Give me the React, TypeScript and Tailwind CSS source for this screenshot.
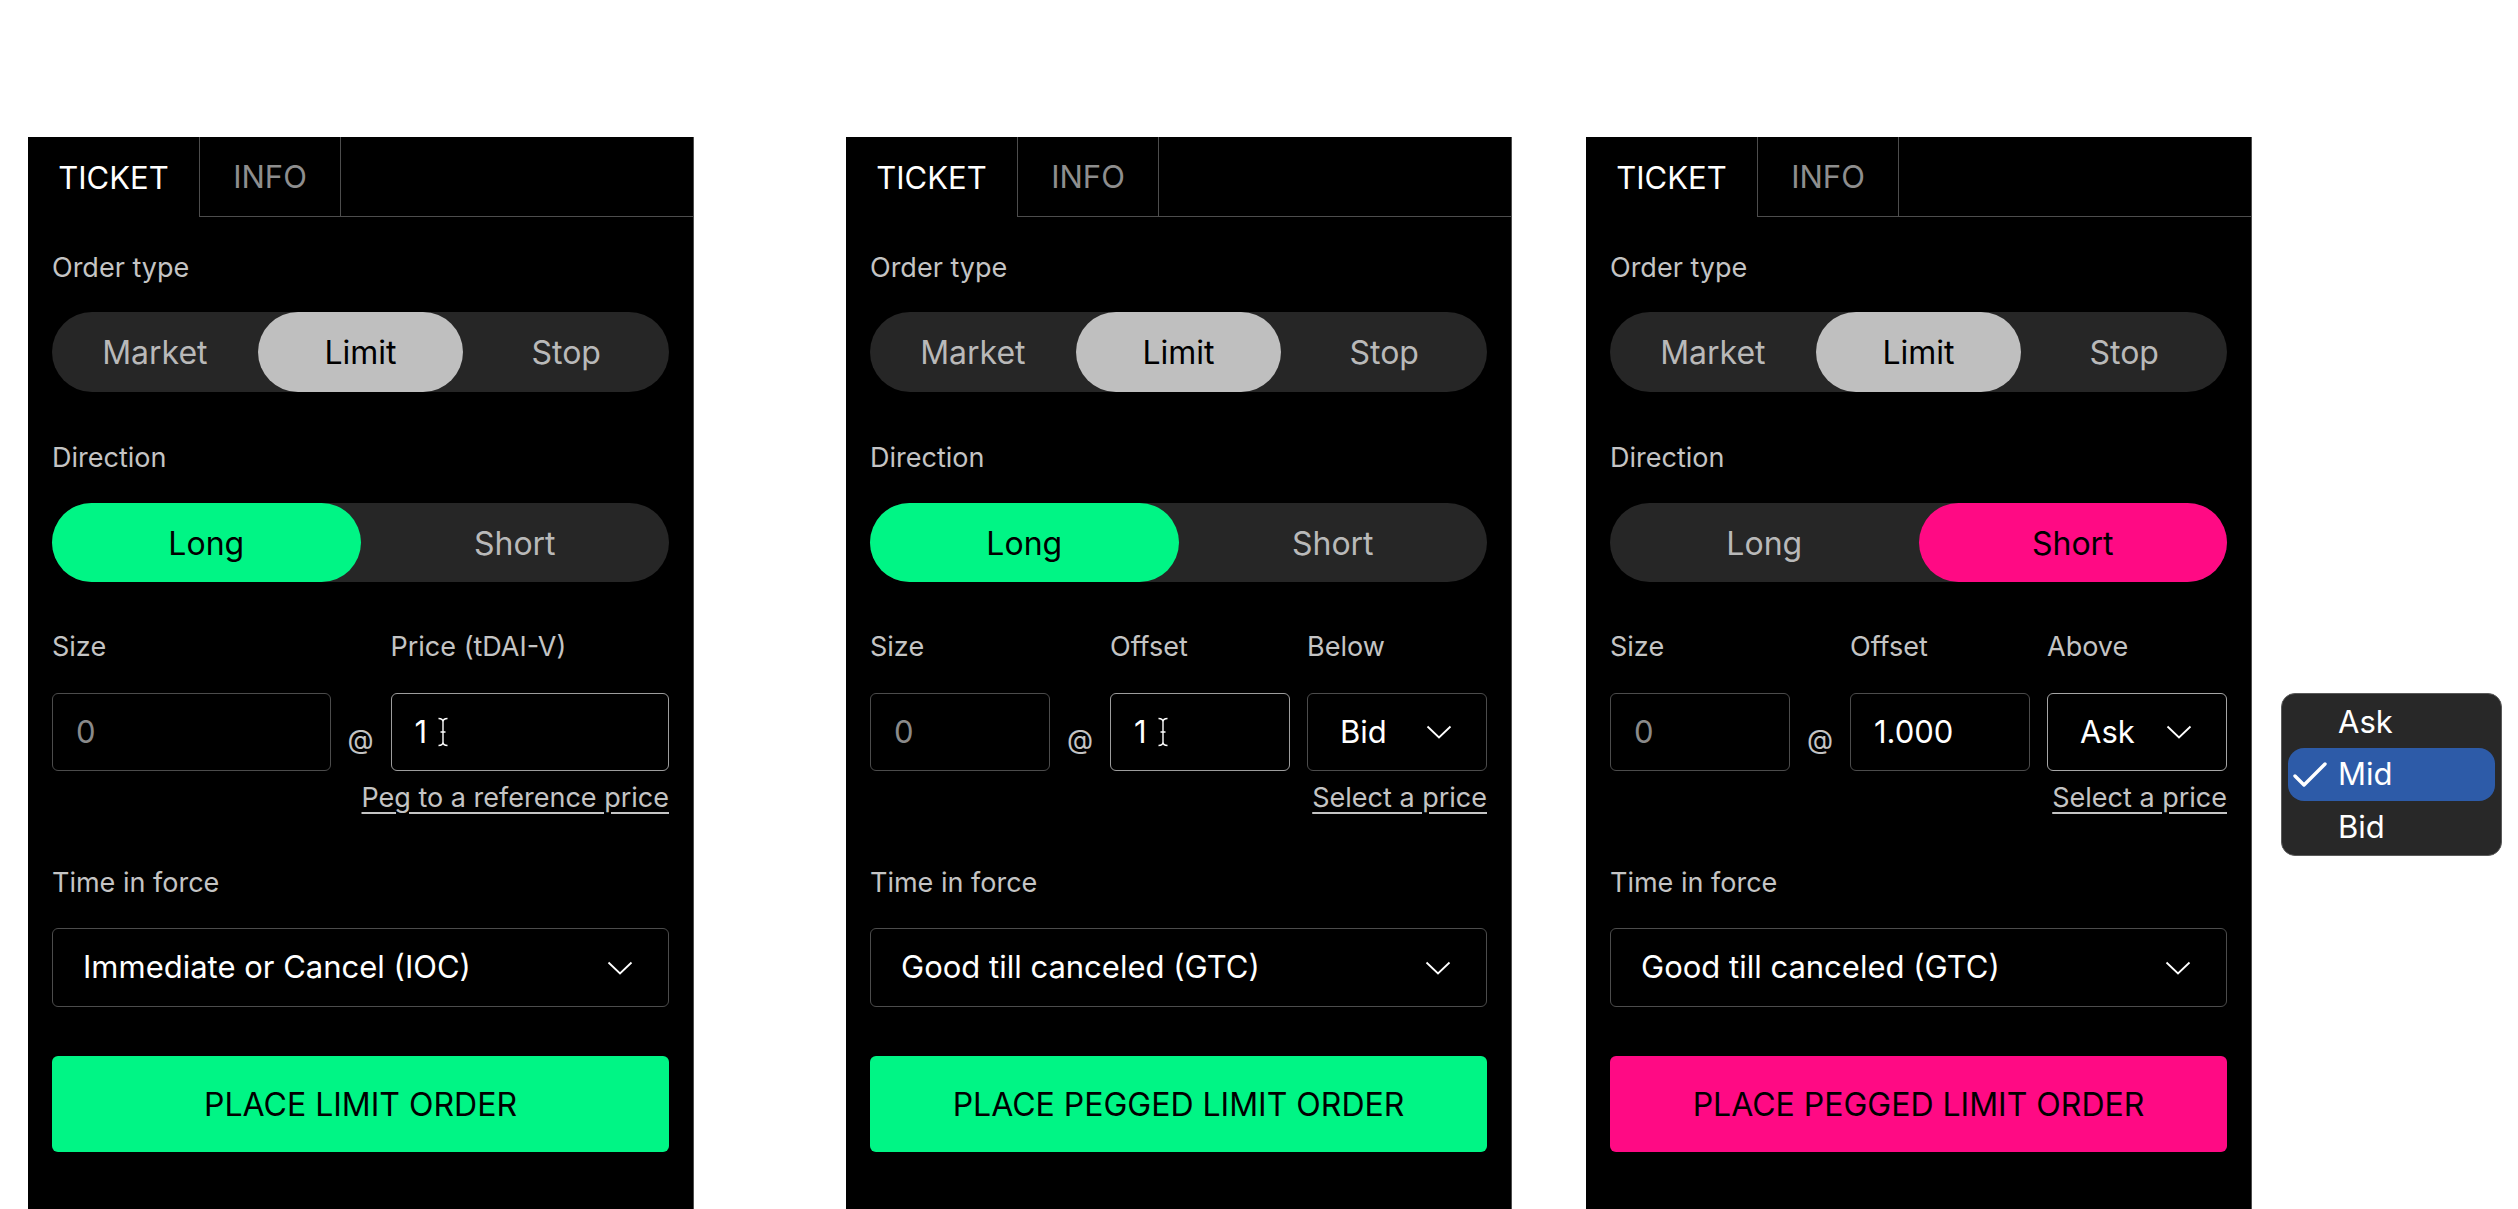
import clsx from 'clsx';

type Kind = 'limit' | 'below' | 'above';

function Chevron() {
  return (
    <svg width="26" height="14" viewBox="0 0 26 14" fill="none">
      <path d="M1.5 1.5 L13 12.5 L24.5 1.5" stroke="#ffffff" strokeWidth="1.8" />
    </svg>
  );
}

function IBeam() {
  return (
    <svg width="12" height="30" viewBox="0 0 12 30" fill="none" className="ml-[10px]">
      <path
        d="M1.5 1.5 Q6 1.5 6 5 Q6 1.5 10.5 1.5 M6 5 V25 M1.5 28.5 Q6 28.5 6 25 Q6 28.5 10.5 28.5 M3.5 15 H8.5"
        stroke="#000000"
        strokeWidth="3.2"
      />
      <path
        d="M1.5 1.5 Q6 1.5 6 5 Q6 1.5 10.5 1.5 M6 5 V25 M1.5 28.5 Q6 28.5 6 25 Q6 28.5 10.5 28.5 M3.5 15 H8.5"
        stroke="#ffffff"
        strokeWidth="1.4"
      />
    </svg>
  );
}

function Label({ children, className }: { children: React.ReactNode; className?: string }) {
  return <div className={clsx('h-[32px] text-[27px] leading-[32px] text-[#c4c4c4]', className)}>{children}</div>;
}

function Field({
  value,
  muted,
  active,
  cursor,
  className,
}: {
  value: string;
  muted?: boolean;
  active?: boolean;
  cursor?: boolean;
  className?: string;
}) {
  return (
    <div
      className={clsx(
        'flex h-[78px] items-center rounded-[6px] border pl-[23px] text-[31px]',
        active ? 'border-[#9d9d9d]' : 'border-[#4c4c4c]',
        muted ? 'text-[#8a8a8a]' : 'text-white',
        className
      )}
    >
      {value}
      {cursor && <IBeam />}
    </div>
  );
}

function PriceSelect({ value, active }: { value: string; active?: boolean }) {
  return (
    <div
      className={clsx(
        'flex h-[78px] w-[180px] items-center justify-between rounded-[6px] border pl-[32px] pr-[34px] text-[31px] text-white',
        active ? 'border-[#a6a6a6]' : 'border-[#4c4c4c]'
      )}
    >
      <span>{value}</span>
      <Chevron />
    </div>
  );
}

function Panel({ kind }: { kind: Kind }) {
  const short = kind === 'above';
  const accent = short ? 'bg-[#ff0a84]' : 'bg-[#00f585]';

  return (
    <div className="flex h-[1072px] w-[666px] shrink-0 flex-col border-r border-[#4d4d4d] bg-black">
      <div className="flex h-[80px] shrink-0">
        <div className="flex h-full w-[171px] items-center justify-center pt-[2px] text-[31px] text-white">TICKET</div>
        <div className="flex h-full w-[142px] items-center justify-center border-b border-l border-r border-[#4d4d4d] pt-[2px] text-[31px] text-[#8e8e8e]">
          INFO
        </div>
        <div className="h-full flex-1 border-b border-[#4d4d4d]" />
      </div>

      <div className="flex flex-col px-[24px] pt-[35px]">
        <Label>Order type</Label>
        <div className="mt-[28px] flex h-[80px] rounded-full bg-[#262626]">
          {['Market', 'Limit', 'Stop'].map((t) => (
            <div
              key={t}
              className={clsx(
                'flex flex-1 items-center justify-center rounded-full pt-[2px] text-[32px]',
                t === 'Limit' ? 'bg-[#bfbfbf] text-black' : 'text-[#b9b9b9]'
              )}
            >
              {t}
            </div>
          ))}
        </div>

        <Label className="mt-[50px]">Direction</Label>
        <div className="mt-[29px] flex h-[79px] rounded-full bg-[#262626]">
          <div
            className={clsx(
              'flex flex-1 items-center justify-center rounded-full pt-[2px] text-[32px]',
              short ? 'text-[#b9b9b9]' : 'bg-[#00f585] text-black'
            )}
          >
            Long
          </div>
          <div
            className={clsx(
              'flex flex-1 items-center justify-center rounded-full pt-[2px] text-[32px]',
              short ? 'bg-[#ff0a84] text-black' : 'text-[#b9b9b9]'
            )}
          >
            Short
          </div>
        </div>

        {kind === 'limit' ? (
          <>
            <div className="mt-[49px] flex">
              <Label className="flex-1">Size</Label>
              <div className="w-[60px]" />
              <Label className="flex-1">Price (tDAI-V)</Label>
            </div>
            <div className="mt-[30px] flex">
              <Field value="0" muted className="flex-1" />
              <div className="flex w-[60px] items-center justify-center pt-[16px] text-[27px] text-[#c4c4c4]">@</div>
              <Field value="1" active cursor className="flex-1" />
            </div>
            <div className="mt-[11px] flex justify-end">
              <span className="text-[27px] leading-[32px] text-[#c4c4c4] underline underline-offset-[5px]">
                Peg to a reference price
              </span>
            </div>
          </>
        ) : (
          <>
            <div className="mt-[49px] flex">
              <Label className="w-[180px]">Size</Label>
              <div className="w-[60px]" />
              <Label className="w-[180px]">Offset</Label>
              <div className="w-[17px]" />
              <Label className="w-[180px]">{short ? 'Above' : 'Below'}</Label>
            </div>
            <div className="mt-[30px] flex">
              <Field value="0" muted className="w-[180px]" />
              <div className="flex w-[60px] items-center justify-center pt-[16px] text-[27px] text-[#c4c4c4]">@</div>
              {short ? (
                <Field value="1.000" className="w-[180px]" />
              ) : (
                <Field value="1" active cursor className="w-[180px]" />
              )}
              <div className="w-[17px]" />
              <PriceSelect value={short ? 'Ask' : 'Bid'} active={short} />
            </div>
            <div className="mt-[11px] flex justify-end">
              <span className="text-[27px] leading-[32px] text-[#c4c4c4] underline underline-offset-[5px]">
                Select a price
              </span>
            </div>
          </>
        )}

        <Label className="mt-[53px]">Time in force</Label>
        <div className="mt-[29px] flex h-[79px] items-center justify-between rounded-[6px] border border-[#4c4c4c] pl-[30px] pr-[35px] text-[31px] text-white">
          <span>{kind === 'limit' ? 'Immediate or Cancel (IOC)' : 'Good till canceled (GTC)'}</span>
          <Chevron />
        </div>

        <div
          className={clsx(
            'mt-[49px] flex h-[96px] items-center justify-center rounded-[6px] pt-[2px] text-[32px] text-black',
            accent
          )}
        >
          {kind === 'limit' ? 'PLACE LIMIT ORDER' : 'PLACE PEGGED LIMIT ORDER'}
        </div>
      </div>
    </div>
  );
}

function PriceMenu() {
  return (
    <div className="ml-[29px] mt-[556px] flex w-[221px] flex-col rounded-[14px] border border-[#5a5a5a] bg-[#282828] px-[6px] py-[2px] text-[31px] text-white">
      <div className="flex h-[52px] items-center pl-[50px]">Ask</div>
      <div className="flex h-[53px] items-center rounded-[16px] bg-[#2d5ba8] pl-[4px]">
        <svg width="36" height="28" viewBox="0 0 36 28" fill="none" className="mr-[10px]">
          <path d="M3 15 L12 24 L33 3" stroke="#ffffff" strokeWidth="3.4" strokeLinecap="round" strokeLinejoin="round" />
        </svg>
        Mid
      </div>
      <div className="flex h-[52px] items-center pl-[50px]">Bid</div>
    </div>
  );
}

export default function App() {
  return (
    <div className="flex h-[1209px] w-full items-start overflow-hidden bg-white pl-[28px] pt-[137px] font-['Inter',sans-serif]">
      <Panel kind="limit" />
      <div className="w-[152px] shrink-0" />
      <Panel kind="below" />
      <div className="w-[74px] shrink-0" />
      <Panel kind="above" />
      <PriceMenu />
    </div>
  );
}
